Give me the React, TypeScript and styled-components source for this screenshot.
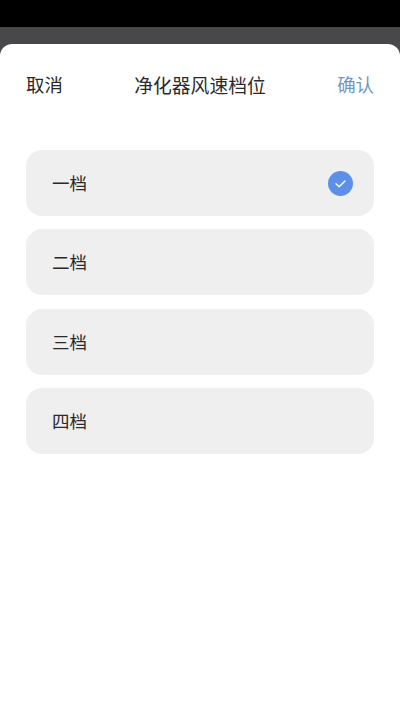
import styled, { createGlobalStyle } from "styled-components";

const GlobalStyle = createGlobalStyle`
    html, body {
        margin: 0;
        padding: 0;
        height: 100%;
        background-color: #000000;
    }

    #root {
        height: 100%;
    }
`;

const Page = styled.div`
    height: 711px;
    display: flex;
    flex-direction: column;
    overflow: hidden;
    font-family: "Noto Sans CJK SC", "Liberation Sans", sans-serif;
`;

const StatusBar = styled.div`
    height: 27px;
    flex-shrink: 0;
    background-color: #000000;
`;

const Backdrop = styled.div`
    flex: 1;
    display: flex;
    flex-direction: column;
    padding-top: 17px;
    background-color: #48484a;
`;

const Sheet = styled.div`
    flex: 1;
    background-color: #ffffff;
    border-radius: 12px 12px 0 0;
    padding: 0 26px;
`;

const Header = styled.div`
    height: 82px;
    display: flex;
    align-items: center;
    justify-content: space-between;
    padding-bottom: 2px;
    box-sizing: border-box;
`;

const HeaderButton = styled.span<{ $primary?: boolean }>`
    font-size: 18.4px;
    color: ${({ $primary }) => ($primary ? "#6f97c4" : "#2a2a2a")};
`;

const Title = styled.span`
    font-size: 18.8px;
    color: #2a2a2a;
`;

const OptionList = styled.div`
    display: flex;
    flex-direction: column;
    gap: 13.3px;
    margin-top: 24px;
`;

const Option = styled.div`
    height: 66px;
    display: flex;
    align-items: center;
    justify-content: space-between;
    padding: 0 21px 1px 26px;
    box-sizing: border-box;
    background-color: #efefef;
    border-radius: 16px;
    font-size: 17.5px;
    color: #2a2a2a;
`;

const CheckBadge = styled.svg`
    width: 25px;
    height: 25px;
    display: block;
    margin-top: 1px;
`;

const options = ["一档", "二档", "三档", "四档"];

const App = () => {
    return (
        <Page>
            <GlobalStyle />
            <StatusBar />
            <Backdrop>
                <Sheet>
                    <Header>
                        <HeaderButton>取消</HeaderButton>
                        <Title>净化器风速档位</Title>
                        <HeaderButton $primary>确认</HeaderButton>
                    </Header>
                    <OptionList>
                        {options.map((label, index) => (
                            <Option key={label}>
                                {label}
                                {index === 0 && (
                                    <CheckBadge viewBox="0 0 25 25">
                                        <circle cx="12.5" cy="12.5" r="12.5" fill="#5b8fe8" />
                                        <path
                                            d="M8 12.8l3.2 3 5.8-5.8"
                                            fill="none"
                                            stroke="#ffffff"
                                            strokeWidth="1.4"
                                            strokeLinecap="round"
                                            strokeLinejoin="round"
                                        />
                                    </CheckBadge>
                                )}
                            </Option>
                        ))}
                    </OptionList>
                </Sheet>
            </Backdrop>
        </Page>
    );
};

export default App;
